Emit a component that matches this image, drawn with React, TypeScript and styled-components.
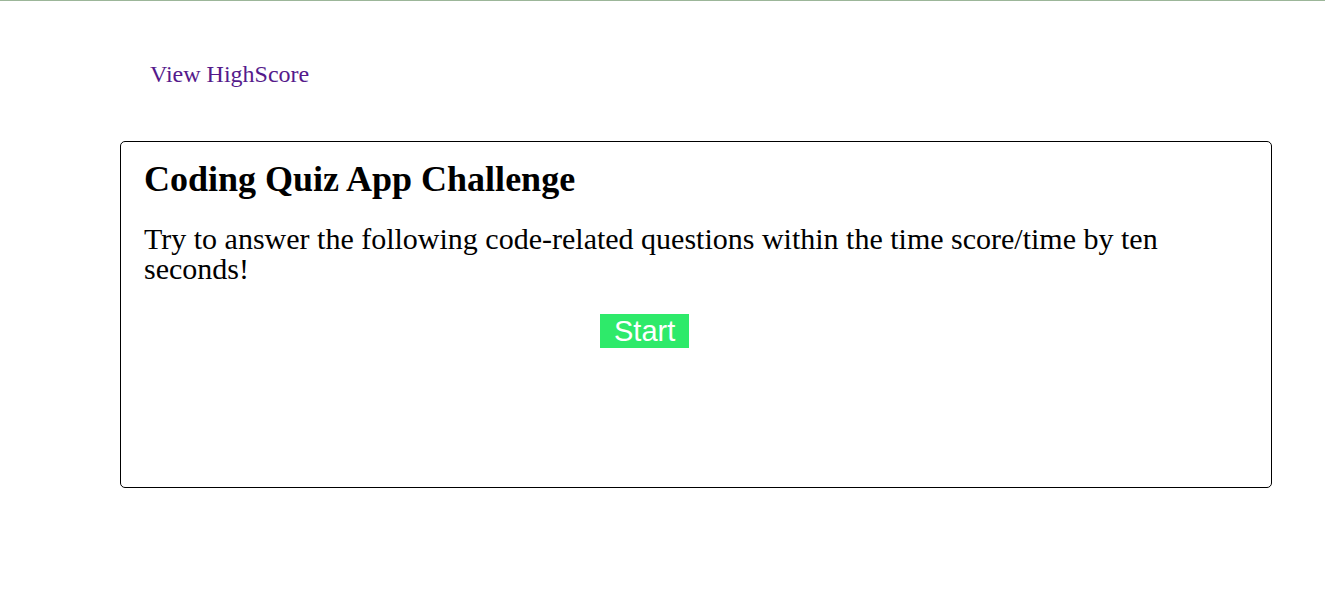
import React from "react";
import styled, { createGlobalStyle } from "styled-components";

const GlobalStyle = createGlobalStyle`
  html, body {
    margin: 0;
    padding: 0;
    background: #ffffff;
  }
  body {
    font-family: "Liberation Serif", "Times New Roman", serif;
    color: #000000;
    border-top: 1px solid #9cb699;
  }
`;

const Page = styled.div`
  display: flex;
  flex-direction: column;
  min-height: 612px;
`;

const Header = styled.header`
  display: flex;
  align-items: flex-start;
  padding: 60px 0 0 150px;
  height: 140px;
  box-sizing: border-box;
`;

const NavLink = styled.a`
  font-size: 24px;
  color: #551a8b;
  text-decoration: none;
  line-height: 27.6px;
`;

const Card = styled.main`
  margin: 0 0 0 120px;
  width: 1152px;
  height: 347px;
  box-sizing: border-box;
  border: 1px solid #000000;
  border-radius: 5px;
  padding: 16px 23px 0 23px;
  display: flex;
  flex-direction: column;
`;

const Title = styled.h1`
  margin: 0;
  font-size: 36px;
  font-weight: bold;
`;

const Intro = styled.p`
  margin: 23.5px 0 30px 0;
  font-size: 30px;
  line-height: 30px;
`;

const ButtonRow = styled.div`
  display: flex;
  padding-left: 456px;
`;

const StartButton = styled.button`
  font-family: "Liberation Sans", Arial, sans-serif;
  font-size: 29px;
  line-height: 34px;
  height: 34px;
  padding: 0 14px;
  border: none;
  background: #2eea6a;
  color: #ffffff;
  cursor: pointer;
`;

export default function App() {
  return (
    <>
      <GlobalStyle />
      <Page>
        <Header>
          <NavLink href="#">View HighScore</NavLink>
        </Header>
        <Card>
          <Title>Coding Quiz App Challenge</Title>
          <Intro>
            Try to answer the following code-related questions within the time
            score/time by ten seconds!
          </Intro>
          <ButtonRow>
            <StartButton>Start</StartButton>
          </ButtonRow>
        </Card>
      </Page>
    </>
  );
}
